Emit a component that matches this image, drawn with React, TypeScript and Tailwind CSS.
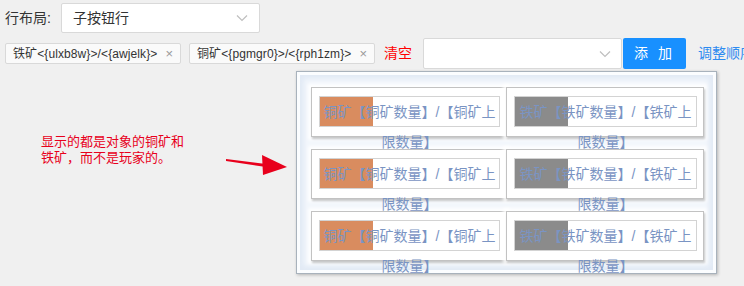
import React from "react";

const font = { fontFamily: '"Liberation Sans", "Noto Sans CJK SC", sans-serif' };

type Ore = { name: string; bar: string };

const rows: Ore[][] = [
    [{ name: "铜矿", bar: "bg-[#d98c5f]" }, { name: "铁矿", bar: "bg-[#8b8b8b]" }],
    [{ name: "铜矿", bar: "bg-[#d98c5f]" }, { name: "铁矿", bar: "bg-[#8b8b8b]" }],
    [{ name: "铜矿", bar: "bg-[#d98c5f]" }, { name: "铁矿", bar: "bg-[#8b8b8b]" }],
];

function Chevron() {
    return (
        <svg width="12" height="8" viewBox="0 0 12 8" fill="none">
            <path d="M1 1.5 L6 6.5 L11 1.5" stroke="#bfbfbf" strokeWidth="1.2" />
        </svg>
    );
}

function Tag({ label }: { label: string }) {
    return (
        <div className="shrink-0 flex items-center h-[21px] pl-[7px] pr-[7px] bg-[#fafafa] border border-[#d9d9d9] rounded-[2px] text-[12px] text-[#333] whitespace-nowrap">
            <span className="tracking-[0.1px]">{label}</span>
            <span className="ml-[8px] text-[#999] text-[13px] leading-none">×</span>
        </div>
    );
}

function Card({ ore }: { ore: Ore }) {
    return (
        <div className="h-[50px] bg-white border border-[#c2c2c2] pt-[8px] pl-[7px] pr-[6px] shadow-[1px_2px_2px_rgba(0,0,0,0.22),0_0_3px_3px_rgba(255,255,255,0.85)]">
            <div className="relative h-[31px] border border-[#d3d3d3]">
                <div className={`absolute left-0 top-0 bottom-0 w-[53px] ${ore.bar}`} />
                <p className="relative text-center text-[14px] leading-[30px] text-[#7a94c3]">
                    {ore.name}【{ore.name}数量】/【{ore.name}上限数量】
                </p>
            </div>
        </div>
    );
}

export default function App() {
    return (
        <div style={font} className="relative w-[744px] h-[286px] bg-[#f0f0f0] overflow-hidden">
            <div className="flex items-center pt-[3px] pl-[5px]">
                <span className="w-[56px] text-[14px] text-[#333]">行布局:</span>
                <div className="flex items-center justify-between w-[199px] h-[30px] bg-white border border-[#d9d9d9] rounded-[2px] pl-[11px] pr-[11px]">
                    <span className="text-[14px] text-[#333]">子按钮行</span>
                    <Chevron />
                </div>
            </div>

            <div className="flex items-center h-[31px] mt-[5px] pl-[5px] whitespace-nowrap">
                <Tag label="铁矿<{ulxb8w}>/<{awjelk}>" />
                <div className="shrink-0 ml-[8px]">
                    <Tag label="铜矿<{pgmgr0}>/<{rph1zm}>" />
                </div>
                <span className="shrink-0 ml-[9px] text-[14px] text-[#ff0000]">清空</span>
                <div className="shrink-0 ml-[11px] flex items-center justify-end w-[199px] h-[31px] bg-white border border-[#d9d9d9] rounded-[2px] pr-[10px]">
                    <Chevron />
                </div>
                <button className="shrink-0 ml-px w-[63px] h-[31px] bg-[#1890ff] rounded-[2px] text-white text-[14px] tracking-[3px]">
                    添 加
                </button>
                <span className="shrink-0 ml-[12px] text-[14px] text-[#2e8bf0]">调整顺序</span>
            </div>

            <div className="ml-[296px] mt-[2px] w-[421px] h-[203px] border border-[#a8b2bc] bg-[#f3f7fc] pt-[15px] pl-[14px] shadow-[1px_1px_3px_rgba(0,0,0,0.25),inset_0_0_0_3px_#fbfdff,inset_0_0_5px_7px_#e2eaf5]">
                <div className="flex flex-col gap-[12px]">
                    {rows.map((row, i) => (
                        <div key={i} className="grid grid-cols-[196px_197px]">
                            {row.map((ore, j) => (
                                <div key={j} className={j === 1 ? "-ml-px" : ""}>
                                    <Card ore={ore} />
                                </div>
                            ))}
                        </div>
                    ))}
                </div>
            </div>

            <div className="absolute left-[41px] top-[134px] text-[13px] leading-[16px] text-[#e8001c]">
                <p>显示的都是对象的铜矿和</p>
                <p>铁矿，而不是玩家的。</p>
            </div>

            <svg className="absolute left-[224px] top-[152px]" width="66" height="26" viewBox="0 0 66 26">
                <path d="M2 7 L42 12 L42 15 L2 9 Z" fill="#e8001c" />
                <path d="M38 3 L63 15 L39 23 Z" fill="#e8001c" />
            </svg>
        </div>
    );
}
